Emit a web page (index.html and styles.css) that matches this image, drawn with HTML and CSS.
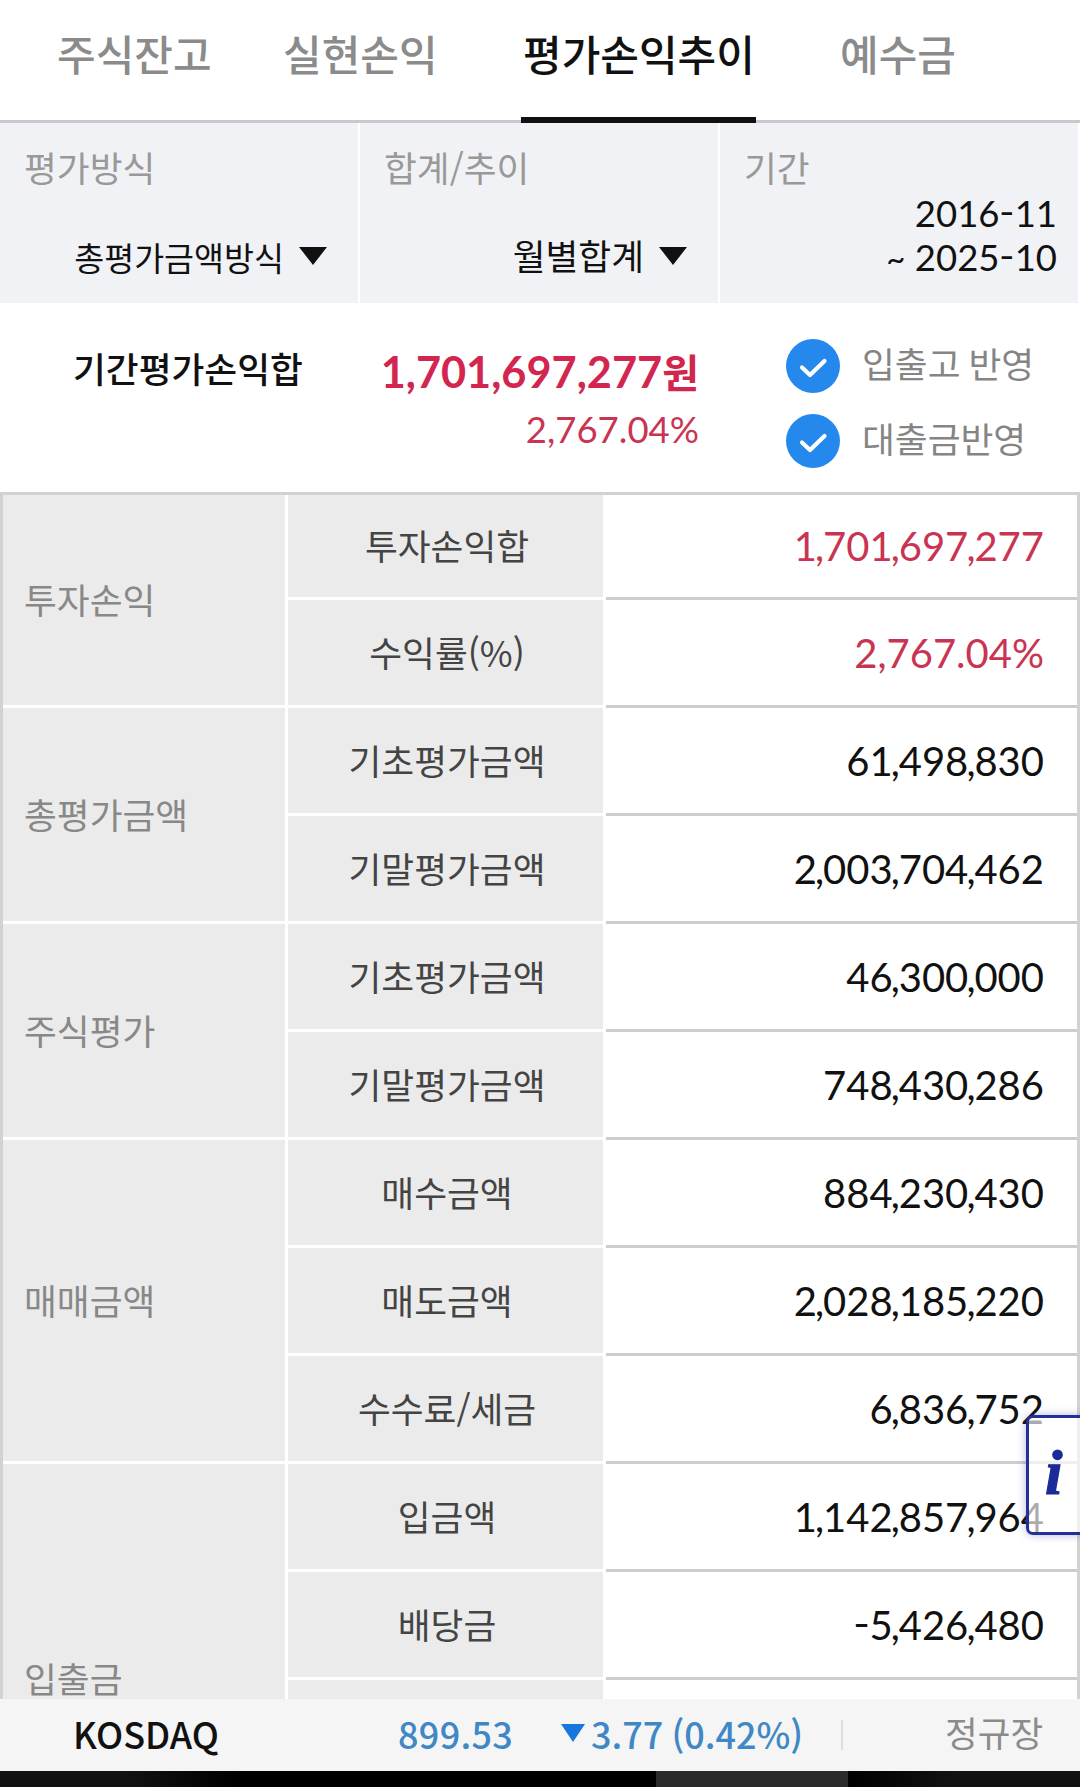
FILE: index.html
```html
<!DOCTYPE html>
<html lang="ko">
<head>
<meta charset="utf-8">
<title>평가손익추이</title>
<link rel="stylesheet" href="styles.css">
</head>
<body>
<nav class="tabs">
  <span class="tab tab-balance">주식잔고</span>
  <span class="tab tab-realized">실현손익</span>
  <span class="tab tab-trend active">평가손익추이</span>
  <span class="tab tab-deposit">예수금</span>
</nav>
<section class="filters">
  <div class="filter">
    <span class="filter-label">평가방식</span>
    <div class="select small"><span>총평가금액방식</span><svg class="caret" viewBox="0 0 28 18"><path d="M0 0H28L14 18Z"/></svg></div>
  </div>
  <div class="filter">
    <span class="filter-label">합계/추이</span>
    <div class="select"><span>월별합계</span><svg class="caret" viewBox="0 0 28 18"><path d="M0 0H28L14 18Z"/></svg></div>
  </div>
  <div class="filter">
    <span class="filter-label">기간</span>
    <div class="period"><span>2016<b class="dash">-</b>11</span><span><small>~</small> 2025<b class="dash">-</b>10</span></div>
  </div>
</section>
<section class="summary">
  <div class="summary-title">기간평가손익합</div>
  <div class="summary-total"><strong>1,701,697,277<span class="won">원</span></strong><span class="rate">2,767.04%</span></div>
  <div class="options">
    <div class="option"><svg class="check" viewBox="0 0 54 54"><circle cx="27" cy="27" r="27"/><path d="M16 28.5L24 36L38.5 22"/></svg><span>입출고 반영</span></div>
    <div class="option"><svg class="check" viewBox="0 0 54 54"><circle cx="27" cy="27" r="27"/><path d="M16 28.5L24 36L38.5 22"/></svg><span>대출금반영</span></div>
  </div>
</section>
<main class="table">
  <div class="group first">
    <div class="category"><span>투자손익</span></div>
    <div class="rows">
      <div class="row"><div class="name">투자손익합</div><div class="value up"><span>1<i>,</i>701<i>,</i>697<i>,</i>277</span></div></div>
      <div class="row"><div class="name">수익률(%)</div><div class="value up"><span>2,767.04%</span></div></div>
    </div>
  </div>
  <div class="group">
    <div class="category"><span>총평가금액</span></div>
    <div class="rows">
      <div class="row"><div class="name">기초평가금액</div><div class="value"><span>61<i>,</i>498<i>,</i>830</span></div></div>
      <div class="row"><div class="name">기말평가금액</div><div class="value"><span>2<i>,</i>003<i>,</i>704<i>,</i>462</span></div></div>
    </div>
  </div>
  <div class="group">
    <div class="category"><span>주식평가</span></div>
    <div class="rows">
      <div class="row"><div class="name">기초평가금액</div><div class="value"><span>46<i>,</i>300<i>,</i>000</span></div></div>
      <div class="row"><div class="name">기말평가금액</div><div class="value"><span>748<i>,</i>430<i>,</i>286</span></div></div>
    </div>
  </div>
  <div class="group">
    <div class="category"><span>매매금액</span></div>
    <div class="rows">
      <div class="row"><div class="name">매수금액</div><div class="value"><span>884<i>,</i>230<i>,</i>430</span></div></div>
      <div class="row"><div class="name">매도금액</div><div class="value"><span>2<i>,</i>028<i>,</i>185<i>,</i>220</span></div></div>
      <div class="row"><div class="name">수수료/세금</div><div class="value"><span>6<i>,</i>836<i>,</i>752</span></div></div>
    </div>
  </div>
  <div class="group">
    <div class="category"><span>입출금</span></div>
    <div class="rows">
      <div class="row"><div class="name">입금액</div><div class="value"><span>1<i>,</i>142<i>,</i>857<i>,</i>964</span></div></div>
      <div class="row"><div class="name">배당금</div><div class="value"><span><b class="dash">-</b>5<i>,</i>426<i>,</i>480</span></div></div>
      <div class="row"><div class="name"></div><div class="value"></div></div>
      <div class="row"><div class="name"></div><div class="value"></div></div>
    </div>
  </div>
</main>
<footer class="ticker">
  <span class="market">KOSDAQ</span>
  <span class="index">899.53</span>
  <svg class="down" viewBox="0 0 24 18"><path d="M0 0H24L12 18Z"/></svg>
  <span class="change">3.77 (0.42%)</span>
  <span class="bar"></span>
  <span class="session">정규장</span>
</footer>
<div class="system"><div class="system-panel"></div></div>
<div class="info">i</div>
</body>
</html>
```
FILE: styles.css
```css
* { box-sizing: border-box; }
body {
  margin: 0;
  position: relative;
  width: 1080px;
  height: 1787px;
  overflow: hidden;
  display: flex;
  flex-direction: column;
  background: #fff;
  color: #111;
  font: 35.7px/44px "Noto Sans CJK KR", sans-serif;
  white-space: nowrap;
}
.tabs {
  flex: none;
  display: flex;
  height: 123px;
  padding-left: 57px;
  border-bottom: 3px solid #c9c9cb;
  font-size: 42px;
  font-weight: 500;
  line-height: 106px;
  color: #8b8b8b;
}
.tab { height: 123px; flex: none; }
.tab-balance { width: 226px; }
.tab-realized { width: 238px; }
.tab-trend { width: 235px; padding-left: 2px; }
.tab-deposit { margin-left: 84px; }
.tab.active { color: #111; border-bottom: 6px solid #111; }
.filters { flex: none; display: flex; height: 180px; }
.filter {
  width: 360px;
  padding: 22px 0 0 24px;
  border-right: 2px solid #fff;
  background: #f1f2f6;
}
.filter-label { display: block; height: 44px; color: #999; }
.select {
  display: flex;
  justify-content: flex-end;
  align-items: center;
  height: 44px;
  margin-top: 44px;
  padding-right: 31px;
  gap: 15px;
}
.small { font-size: 32.6px; margin-top: 46px; }
.caret { width: 28px; height: 18px; margin-top: 2px; fill: #111; }
.small .caret { margin-top: -2px; }
.period {
  display: flex;
  flex-direction: column;
  align-items: flex-end;
  padding-right: 21px;
  margin-top: 2px;
  font: 36.5px/44px Lato, sans-serif;
}
.period small { font-size: 33px; }
.dash { display: inline-block; font-weight: 400; transform: translateY(-2px) scaleX(1.15); margin: 0 .8px; }
.summary {
  flex: none;
  display: flex;
  height: 189px;
  padding-left: 73px;
}
.summary-title { width: 250px; padding-top: 43px; font-weight: 500; }
.summary-total {
  width: 376px;
  padding-top: 40px;
  display: flex;
  flex-direction: column;
  align-items: flex-end;
  font: 36.5px/44px Lato, sans-serif;
  color: #c93452;
}
.summary-total strong { font-size: 43.3px; line-height: 56px; color: #d22650; }
.won { font: 700 40px/50px "Noto Sans CJK KR", sans-serif; }
.rate { line-height: 60px; }
.options { padding: 36px 0 0 87px; display: grid; gap: 21px; align-content: start; color: #858585; }
.option { display: flex; align-items: center; height: 54px; gap: 22px; }
.option span { padding-bottom: 6px; word-spacing: -2px; }
.check { width: 54px; height: 54px; }
.check circle { fill: #2588ed; }
.check path { fill: none; stroke: #fff; stroke-width: 4.2; stroke-linecap: round; stroke-linejoin: round; }
.table {
  flex: none;
  height: 1207px;
  overflow: hidden;
  border: 3px solid #d2d2d2;
  border-bottom: 0;
}
.group { display: grid; grid-template-columns: 282px 789px; gap: 3px; }
.category {
  display: flex;
  align-items: center;
  margin-bottom: 3px;
  padding: 0 0 2px 21px;
  background: #ebebeb;
  color: #888;
}
.row { display: grid; grid-template-columns: 315px 471px; gap: 3px; height: 108px; }
.first .row:first-child { height: 105px; }
.name {
  display: flex;
  align-items: center;
  justify-content: center;
  margin-bottom: 3px;
  padding: 0 0 2px 3px;
  background: #ebebeb;
  color: #444;
}
.value {
  display: flex;
  align-items: center;
  justify-content: flex-end;
  padding-right: 33px;
  border-bottom: 3px solid #cdcdcd;
  font: 40px/48px Lato, sans-serif;
}
.value i { font-style: normal; margin-left: -1.8px; letter-spacing: -1.2px; }
.up { color: #c93452; }
.ticker {
  flex: none;
  display: flex;
  align-items: center;
  height: 72px;
  padding: 0 0 4px 73px;
  background: #f5f5f5;
  font-size: 36px;
  font-weight: 500;
}
.market { width: 325px; }
.index { width: 163px; color: #3f88c5; letter-spacing: .3px; }
.down { width: 24px; height: 18px; fill: #1976dc; }
.change { margin-left: 6px; width: 250px; color: #3f88c5; word-spacing: -2px; }
.bar { width: 2px; height: 30px; margin-top: 3px; background: #ddd; }
.session { margin-left: 102px; padding-bottom: 3px; color: #8b8b8b; font-size: 35.6px; font-weight: 400; }
.system {
  flex: none;
  height: 16px;
  padding-left: 656px;
  background: linear-gradient(90deg, #111 0, #111 130px, #000 240px, #000 850px, #111 950px);
}
.system-panel { width: 192px; height: 16px; background: #2b2b2b; }
.info {
  position: absolute;
  left: 1026px;
  top: 1415px;
  width: 57px;
  height: 120px;
  padding-left: 16px;
  border: 3px solid #23309a;
  border-radius: 7px 0 0 7px;
  background: rgba(255, 255, 255, .65);
  box-shadow: 0 0 8px rgba(40, 50, 150, .35);
  color: #1c2a98;
  -webkit-text-stroke: 1.2px #1c2a98;
  font: italic 700 63px/111px "Liberation Serif", serif;
}
```
